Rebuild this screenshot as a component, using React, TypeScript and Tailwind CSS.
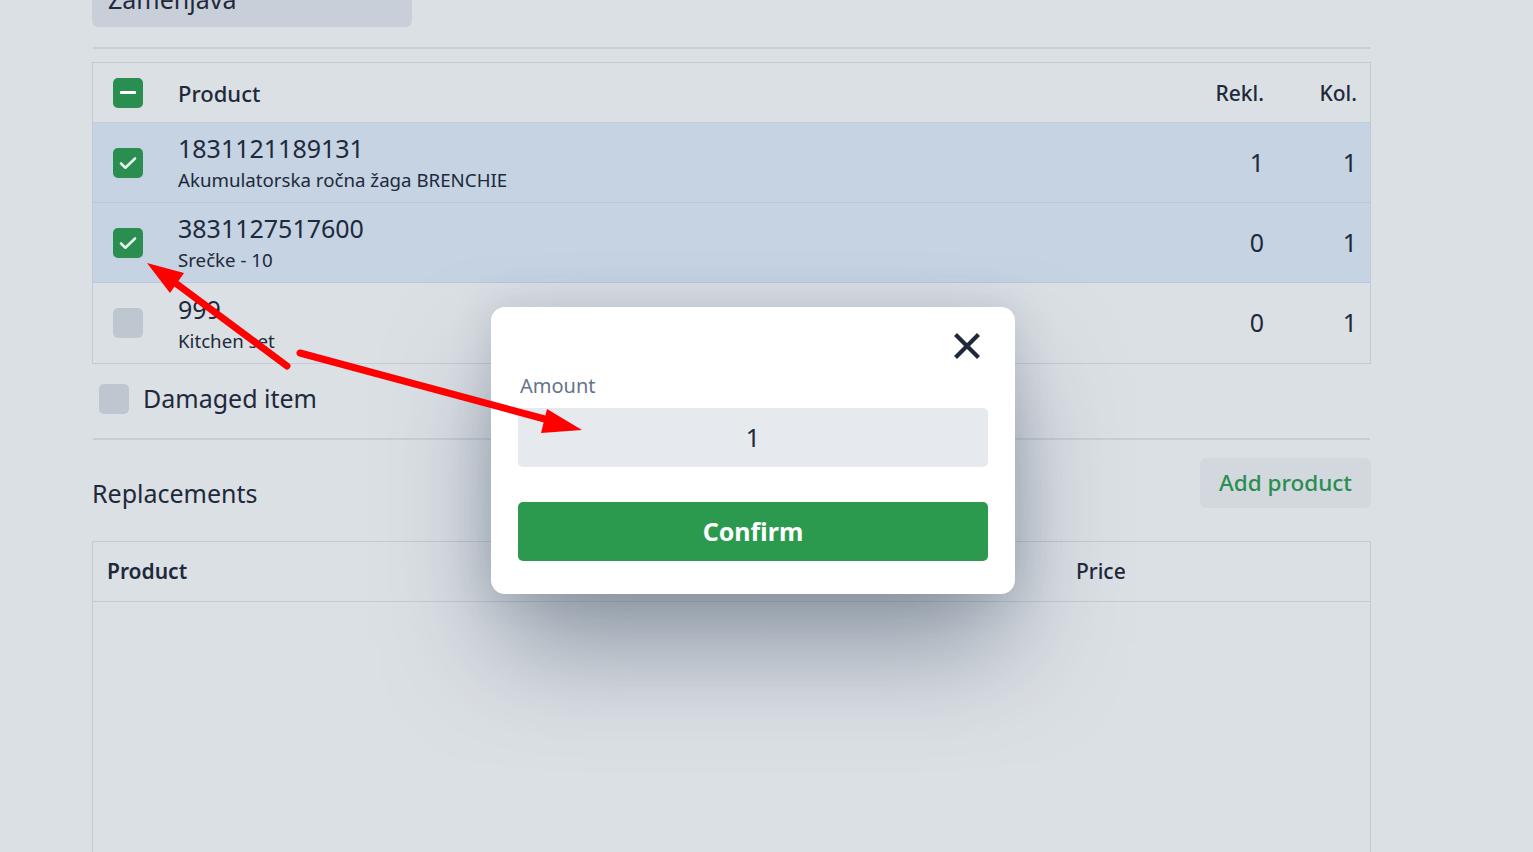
import React from "react";

type Row = { code: string; name: string; rekl: number; kol: number; checked: boolean };

const rows: Row[] = [
  { code: "1831121189131", name: "Akumulatorska ročna žaga BRENCHIE", rekl: 1, kol: 1, checked: true },
  { code: "3831127517600", name: "Srečke - 10", rekl: 0, kol: 1, checked: true },
  { code: "999", name: "Kitchen set", rekl: 0, kol: 1, checked: false },
];

function Checkbox({ state }: { state: "checked" | "partial" | "off" }) {
  if (state === "off") {
    return <span className="block h-[30px] w-[30px] shrink-0 rounded-[5px] bg-[#bec6d0]" />;
  }
  return (
    <span className="flex h-[30px] w-[30px] shrink-0 items-center justify-center rounded-[5px] bg-[#298e50]">
      {state === "checked" ? (
        <svg width="22" height="22" viewBox="0 0 22 22" fill="none" aria-hidden>
          <path d="M4 11.5l4.4 4.2L18 6.5" stroke="#e8f3ec" strokeWidth="2.6" strokeLinecap="round" strokeLinejoin="round" />
        </svg>
      ) : (
        <span className="block h-[3px] w-[16px] rounded-[1px] bg-white" />
      )}
    </span>
  );
}

function Arrows() {
  return (
    <svg className="pointer-events-none absolute left-0 top-0" width="1533" height="852" aria-hidden>
      <line x1="287" y1="366" x2="170" y2="279" stroke="#ff0000" strokeWidth="7" strokeLinecap="round" />
      <polygon points="147,263 170,293 184,273" fill="#ff0000" />
      <line x1="300" y1="353" x2="552" y2="421" stroke="#ff0000" strokeWidth="7" strokeLinecap="round" />
      <polygon points="582,430 541,433 547,409" fill="#ff0000" />
    </svg>
  );
}

export default function App() {
  return (
    <div
      className="relative h-[852px] w-[1533px] overflow-hidden bg-[#dbe0e5] text-[#1e293b]"
      style={{ fontFamily: '"Noto Sans", "Open Sans", sans-serif' }}
    >
      <div className="ml-[92px] w-[1279px]">
        {/* type select, scrolled partly off */}
        <div className="mt-[-29px] flex h-[56px] w-[320px] items-center justify-between rounded-[6px] bg-[#c8cfd9] pl-[16px] pr-[24px]">
          <span className="text-[25px] leading-none">Zamenjava</span>
          <svg width="12" height="8" viewBox="0 0 12 8" className="mt-[-24px]" aria-hidden>
            <path d="M2 2l4 4 4-4" stroke="#5b6880" strokeWidth="2.2" fill="none" strokeLinecap="round" />
          </svg>
        </div>

        <div className="mx-[1px] mt-[20px] h-[2px] bg-[#c9ced6]" />

        {/* products table */}
        <div className="mt-[13px] border border-[#c3cad3]">
          <div className="flex h-[60px] items-center border-b border-[#c3cad3] pl-[20px] pr-[13px]">
            <Checkbox state="partial" />
            <span className="ml-[35px] mt-[2px] flex-1 text-[22px] font-medium">Product</span>
            <span className="mt-[2px] w-[100px] text-right text-[21px] font-medium">Rekl.</span>
            <span className="mt-[2px] w-[93px] text-right text-[21px] font-medium">Kol.</span>
          </div>
          {rows.map((r, i) => (
            <div
              key={r.code}
              className={`flex h-[80px] items-center pl-[20px] pr-[13px] ${i < rows.length - 1 ? "border-b border-[#b9c7d8]" : ""} ${r.checked ? "bg-[#c5d3e3]" : ""}`}
            >
              <Checkbox state={r.checked ? "checked" : "off"} />
              <div className="ml-[35px] flex-1 pt-[1px]">
                <div className="text-[25px] leading-[30px]">{r.code}</div>
                <div className="mt-[4px] text-[18.7px] leading-[26px]">{r.name}</div>
              </div>
              <span className="w-[100px] text-right text-[25px]">{r.rekl}</span>
              <span className="w-[93px] text-right text-[25px]">{r.kol}</span>
            </div>
          ))}
        </div>

        <div className="mt-[16px] flex items-center pl-[7px]">
          <Checkbox state="off" />
          <span className="ml-[14px] text-[25px]">Damaged item</span>
        </div>

        <div className="mx-[1px] mt-[20px] h-[2px] bg-[#c9ced6]" />

        <div className="mt-[15px] flex items-center justify-between">
          <span className="mt-[20px] text-[25px]">Replacements</span>
          <button className="h-[50px] rounded-[6px] bg-[#d2d8de] px-[19px] text-[22.5px] font-medium text-[#298e50]">
            Add product
          </button>
        </div>

        {/* replacements table */}
        <div className="mt-[29px] h-[320px] border border-[#c3cad3]">
          <div className="flex h-[60px] items-center border-b border-[#c3cad3] pl-[14px]">
            <span className="w-[969px] text-[21px] font-semibold">Product</span>
            <span className="text-[21px] font-medium">Price</span>
          </div>
        </div>
      </div>

      {/* amount modal */}
      <div className="absolute left-[491px] top-[307px] w-[524px] rounded-[14px] bg-white px-[27px] pb-[33px] pt-[26px] shadow-[0_0_40px_rgba(71,85,105,0.18),0_60px_110px_-10px_rgba(71,85,105,0.55)]">
        <div className="flex justify-end pr-[8px]">
          <svg width="26" height="26" viewBox="0 0 26 26" aria-hidden>
            <path d="M3 3l20 20M23 3L3 23" stroke="#1e293b" strokeWidth="4.2" strokeLinecap="square" />
          </svg>
        </div>
        <div className="mt-[12px] pl-[2px] text-[20px] text-[#64748b]">Amount</div>
        <div className="mt-[7px] flex h-[59px] items-center justify-center rounded-[5px] bg-[#e6e9ee] text-[25px]">1</div>
        <button className="mt-[35px] flex h-[59px] w-full items-center justify-center rounded-[5px] bg-[#2b9a4e] text-[25px] font-bold text-white">
          Confirm
        </button>
      </div>

      <Arrows />
    </div>
  );
}
